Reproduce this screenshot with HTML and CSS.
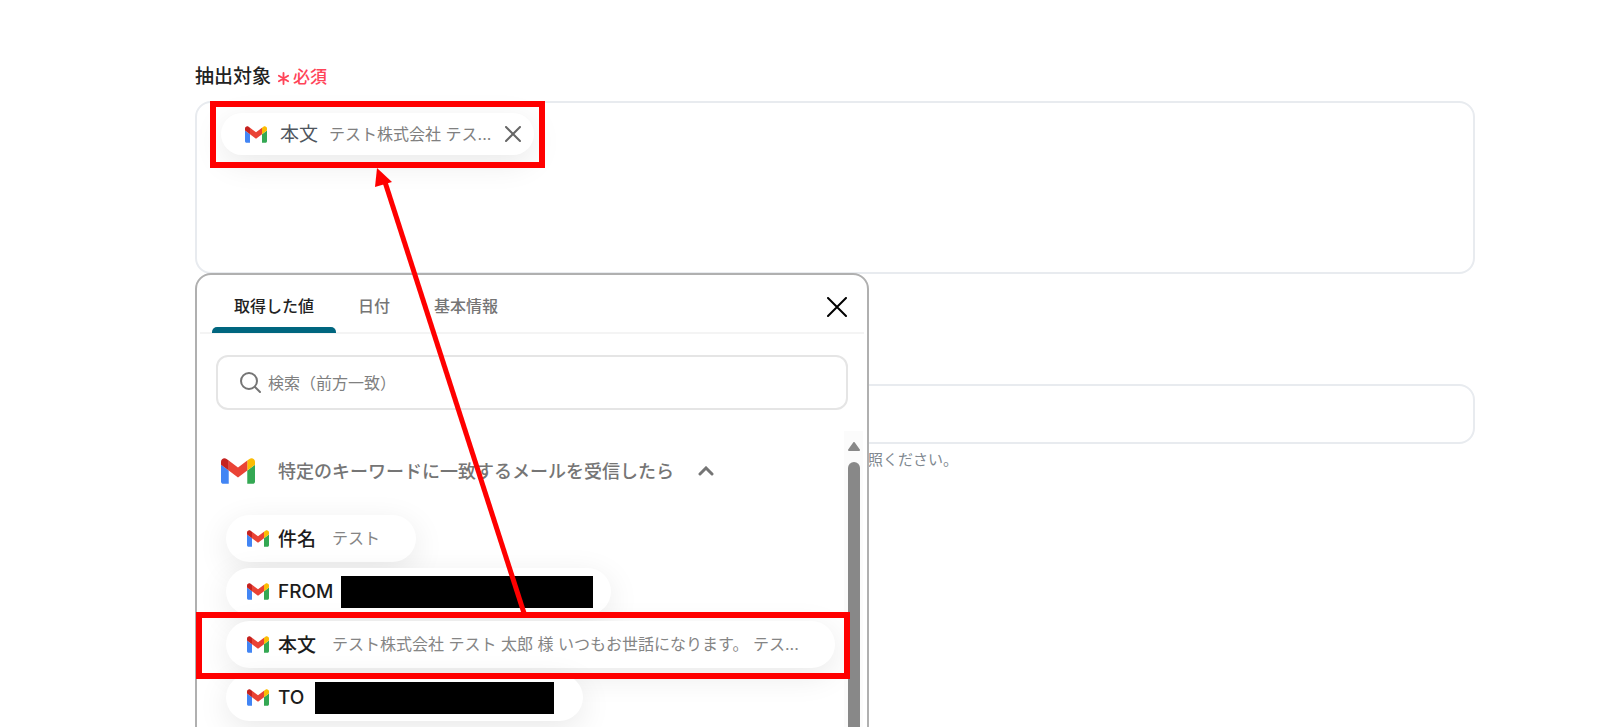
FILE: index.html
```
<!DOCTYPE html>
<html lang="ja">
<head>
    <meta charset="UTF-8">
    <meta name="viewport" content="width=device-width, initial-scale=1.0">
    <title>抽出対象</title>
    <link rel="stylesheet" href="styles.css">
</head>
<body>
    <svg width="0" height="0" class="defs" aria-hidden="true">
        <symbol id="gmail" viewBox="52 42 88 66">
            <path fill="#4285f4" d="M58 108h14V74L52 59v43c0 3.320 2.690 6 6 6"/>
            <path fill="#34a853" d="M120 108h14c3.320 0 6-2.690 6-6V59l-20 15"/>
            <path fill="#fbbc04" d="M120 48v26l20-15v-8c0-7.420-8.470-11.650-14.400-7.200"/>
            <path fill="#ea4335" d="M72 74V48l24 18 24-18v26L96 92"/>
            <path fill="#c5221f" d="M52 51v8l20 15V48l-5.600-4.200c-5.940-4.450-14.400-.220-14.400 7.200"/>
        </symbol>
    </svg>

    <main class="page">
        <h1 class="field-title">抽出対象
            <span class="required">
                <svg class="asterisk" viewBox="0 0 14 14" aria-hidden="true"><path d="M7 1v12M2 4l10 6M12 4L2 10"/></svg>必須
            </span>
        </h1>

        <div class="target-box">
            <div class="tag">
                <svg class="mail-icon"><use href="#gmail"/></svg>
                <span class="tag-name">本文</span>
                <span class="tag-value">テスト株式会社 テス...</span>
                <button class="tag-remove" type="button" aria-label="削除">
                    <svg viewBox="0 0 16 16"><path d="M1 1l14 14M15 1L1 15"/></svg>
                </button>
            </div>
        </div>

        <input class="text-field" type="text" aria-label="抽出項目">
        <p class="help">照ください。</p>

        <section class="picker">
            <div class="tabs" role="tablist">
                <button class="tab active" type="button" role="tab">取得した値</button>
                <button class="tab" type="button" role="tab">日付</button>
                <button class="tab" type="button" role="tab">基本情報</button>
                <button class="close" type="button" aria-label="閉じる">
                    <svg viewBox="0 0 20 20"><path d="M1 1l18 18M19 1L1 19"/></svg>
                </button>
            </div>

            <label class="search">
                <svg viewBox="0 0 22 22" aria-hidden="true"><circle cx="10" cy="9" r="8"/><path d="M16 15l5 5"/></svg>
                <input type="text" placeholder="検索（前方一致）" aria-label="検索">
            </label>

            <div class="results">
                <div class="values">
                    <button class="group" type="button">
                        <svg class="mail-icon-large"><use href="#gmail"/></svg>
                        <span class="group-name">特定のキーワードに一致するメールを受信したら</span>
                        <svg class="chevron" viewBox="0 0 16 10"><path d="M2 8l6-6 6 6"/></svg>
                    </button>
                    <button class="chip" type="button">
                        <svg class="mail-icon"><use href="#gmail"/></svg>
                        <span class="chip-name">件名</span>
                        <span class="chip-value">テスト</span>
                    </button>
                    <button class="chip masked" type="button">
                        <svg class="mail-icon"><use href="#gmail"/></svg>
                        <span class="chip-name">FROM</span>
                        <span class="mask mask-from"></span>
                    </button>
                    <button class="chip" type="button">
                        <svg class="mail-icon"><use href="#gmail"/></svg>
                        <span class="chip-name">本文</span>
                        <span class="chip-value">テスト株式会社 テスト 太郎 様 いつもお世話になります。 テス...</span>
                    </button>
                    <button class="chip masked" type="button">
                        <svg class="mail-icon"><use href="#gmail"/></svg>
                        <span class="chip-name">TO</span>
                        <span class="mask mask-to"></span>
                    </button>
                </div>
                <div class="scrollbar" aria-hidden="true">
                    <svg viewBox="0 0 14 10"><path d="M7 1l5 7H2z"/></svg>
                    <div class="thumb"></div>
                </div>
            </div>
        </section>

        <!-- callouts drawn over the form -->
        <div class="callout callout-tag"></div>
        <div class="callout callout-value"></div>
        <svg class="arrow" viewBox="0 0 170 446" aria-hidden="true">
            <path class="arrow-line" d="M154 445L15 14"/>
            <path class="arrow-head" d="M7 0L5 19L22 14z"/>
        </svg>
    </main>
</body>
</html>
```

FILE: styles.css
```
* {
    box-sizing: border-box;
}

body {
    margin: 0;
    background-color: #fff;
    color: #222;
    font-family: Inter, "Noto Sans CJK JP", sans-serif;
    font-size: 16px;
}

button {
    border: none;
    background: none;
    padding: 0;
    font: inherit;
    color: inherit;
    cursor: pointer;
}

svg {
    display: block;
    flex: none;
    fill: none;
    stroke-linecap: round;
}

.defs {
    position: absolute;
}

.page {
    position: relative;
    height: 100vh;
    overflow: hidden;
    padding: 63px 125px 0 195px;
}

.field-title {
    display: flex;
    align-items: center;
    gap: 6px;
    margin: 0 0 10px;
    font-size: 19px;
    font-weight: 500;
    line-height: 28px;
}

.required {
    display: flex;
    align-items: center;
    gap: 3px;
    color: #ff4458;
    font-size: 17px;
}

.asterisk {
    width: 13px;
    height: 13px;
    margin-top: 3px;
    stroke: #ff4458;
    stroke-width: 2;
}

.target-box {
    height: 173px;
    padding: 10px 24px;
    border: 2px solid #e8ebef;
    border-radius: 16px;
}

.tag {
    display: inline-flex;
    align-items: center;
    height: 42px;
    padding: 0 13px 0 24px;
    border-radius: 21px;
    background-color: #fff;
    box-shadow: 0 8px 32px rgba(0, 0, 0, 0.09);
}

.mail-icon {
    width: 22px;
    height: 17px;
}

.tag-name {
    margin: 0 11px 0 13px;
    padding-bottom: 3px;
    color: #4f565e;
    font-size: 19px;
}

.tag-value {
    padding-bottom: 3px;
    color: #808080;
}

.tag-remove svg {
    width: 16px;
    height: 16px;
    margin-left: 14px;
    stroke: #666;
    stroke-width: 2;
}

.text-field {
    display: block;
    width: 100%;
    height: 60px;
    margin-top: 110px;
    padding: 0 20px;
    border: 2px solid #e8ebef;
    border-radius: 16px;
    font: inherit;
}

.help {
    margin: 4px 0 0;
    padding-left: 673px;
    color: #808890;
    font-size: 15px;
    line-height: 24px;
}

.picker {
    position: absolute;
    top: 273px;
    bottom: -20px;
    left: 195px;
    display: flex;
    flex-direction: column;
    width: 674px;
    border: 2px solid #b0b0b0;
    border-radius: 16px;
    background-color: #fff;
}

.tabs {
    display: flex;
    height: 59px;
    margin: 0 3px;
    padding: 0 17px 0 12px;
    border-bottom: 2px solid #f4f4f4;
}

.tab {
    position: relative;
    padding: 2px 22px 0;
    color: #757575;
    font-weight: 500;
}

.tab.active {
    color: #222;
}

.tab.active::after {
    content: "";
    position: absolute;
    right: 0;
    bottom: -1px;
    left: 0;
    height: 6px;
    border-radius: 5px 5px 0 0;
    background-color: #00667f;
}

.close {
    margin-left: auto;
    padding-top: 7px;
}

.close svg {
    width: 20px;
    height: 20px;
    stroke: #000;
    stroke-width: 2;
}

.search {
    display: flex;
    align-items: center;
    gap: 7px;
    height: 55px;
    margin: 21px 19px 0;
    padding: 0 21px;
    border: 2px solid #e5e5e5;
    border-radius: 12px;
}

.search svg {
    width: 22px;
    height: 22px;
    stroke: #757575;
    stroke-width: 2;
}

.search input {
    flex: 1;
    border: none;
    outline: none;
    padding: 0;
    font: inherit;
}

.search input::placeholder {
    color: #808080;
}

.results {
    display: flex;
    flex: 1;
    min-height: 0;
    margin-top: 21px;
    overflow: hidden;
}

.values {
    display: flex;
    flex: 1;
    flex-direction: column;
    align-items: flex-start;
    gap: 6px;
    min-width: 0;
    padding: 18px 0 0 29px;
}

.group {
    display: flex;
    align-items: center;
    height: 44px;
    margin: 0 0 16px -5px;
    color: #757575;
    font-size: 18px;
    font-weight: 500;
    white-space: nowrap;
}

.group-name {
    padding-bottom: 3px;
}

.mail-icon-large {
    width: 34px;
    height: 26px;
    margin-right: 23px;
}

.chevron {
    width: 16px;
    height: 10px;
    margin-left: 24px;
    stroke: #757575;
    stroke-width: 3;
}

.chip {
    display: flex;
    align-items: center;
    height: 47px;
    padding: 0 36px 0 21px;
    border-radius: 24px;
    background-color: #fff;
    box-shadow: 0 8px 32px rgba(0, 0, 0, 0.09);
    white-space: nowrap;
}

.chip-name {
    margin-left: 9px;
    padding-bottom: 3px;
    color: #1c1c1c;
    font-size: 19px;
    font-weight: 500;
}

.chip-value {
    margin-left: 16px;
    padding-bottom: 3px;
    color: #858585;
}

.chip.masked {
    padding-right: 18px;
}

.chip.masked .chip-name {
    padding-bottom: 0;
}

.mask {
    height: 32px;
    background-color: #000;
}

.mask-from {
    width: 252px;
    margin-left: 8px;
}

.mask-to {
    width: 239px;
    margin-left: 11px;
    margin-right: 11px;
}

.scrollbar {
    display: flex;
    flex-direction: column;
    align-items: center;
    gap: 10px;
    width: 19px;
    margin-right: 4px;
    padding-top: 11px;
    background-color: #fbfbfb;
}

.scrollbar svg {
    width: 14px;
    height: 10px;
    fill: #888;
    stroke: #888;
    stroke-width: 2;
    stroke-linejoin: round;
}

.thumb {
    flex: 1;
    width: 12px;
    border-radius: 6px;
    background-color: #888;
}

.callout {
    position: absolute;
    border: 6px solid #f00;
}

.callout-tag {
    top: 101px;
    left: 210px;
    width: 335px;
    height: 67px;
}

.callout-value {
    top: 612px;
    left: 196px;
    width: 654px;
    height: 67px;
}

.arrow {
    position: absolute;
    top: 168px;
    left: 370px;
    width: 170px;
    height: 446px;
}

.arrow-line {
    stroke: #f00;
    stroke-width: 5;
    stroke-linecap: butt;
}

.arrow-head {
    fill: #f00;
}
```
